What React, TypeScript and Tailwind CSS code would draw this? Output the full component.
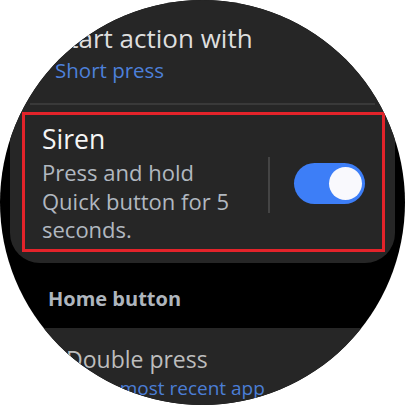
import React from 'react';

const font = { fontFamily: '"Open Sans", "Noto Sans", sans-serif' };

const Toggle = ({ on }: { on: boolean }) => {
  return (
    <div
      className={`relative h-[41px] w-[71px] shrink-0 rounded-full ${on ? 'bg-[#3d7ef7]' : 'bg-[#555]'}`}
    >
      <span className="absolute right-[3px] top-[4px] block h-[33px] w-[33px] rounded-full bg-[#f9f9fd]"></span>
    </div>
  );
};

const App = () => {
  return (
    <div className="h-[405px] w-[405px] bg-white" style={font}>
      <div className="h-full w-full overflow-hidden rounded-full bg-black">
        {/* top card */}
        <div className="mx-[10px] rounded-b-[30px] bg-[#262626] pb-[11px]">
          <div className="pl-[45px] pt-[23px]">
            <div className="text-[26px] leading-[30px] text-[#dedede] whitespace-nowrap">Start action with</div>
            <div className="mt-[5px] text-[20.5px] leading-[24px] text-[#4d80da]">Short press</div>
          </div>
          <div className="mx-[20px] mt-[21px] h-[2px] bg-[#393939]"></div>
          <div className="ml-[12px] mr-[10px] mt-[7px] flex items-center border-[3px] border-[#e3232a] pb-[5px] pl-[17px] pr-[17px] pt-[9px]">
            <div className="flex-1">
              <div className="text-[26.5px] leading-[30px] text-[#f5f5f5]">Siren</div>
              <div className="mt-[4px] w-[205px] text-[22px] leading-[28.5px] text-[#b1b8c0]">
                Press and hold Quick button for 5 seconds.
              </div>
            </div>
            <div className="mr-[24px] mt-[2px] h-[56px] w-[2px] bg-[#444]"></div>
            <Toggle on />
          </div>
        </div>

        {/* home button section */}
        <div className="mt-[24px] pl-[48px] text-[20px] font-bold leading-[24px] text-[#aeb5bd]">
          Home button
        </div>
        <div className="mx-[10px] mt-[17px] h-[120px] rounded-t-[30px] bg-[#262626] pl-[56px] pt-[16px]">
          <div className="text-[23px] leading-[30px] text-[#bdbdbd]">Double press</div>
          <div className="mt-[2px] text-[19px] leading-[24px] text-[#4b7ed6] whitespace-nowrap">Open most recent app</div>
        </div>
      </div>
    </div>
  );
};

export default App;
